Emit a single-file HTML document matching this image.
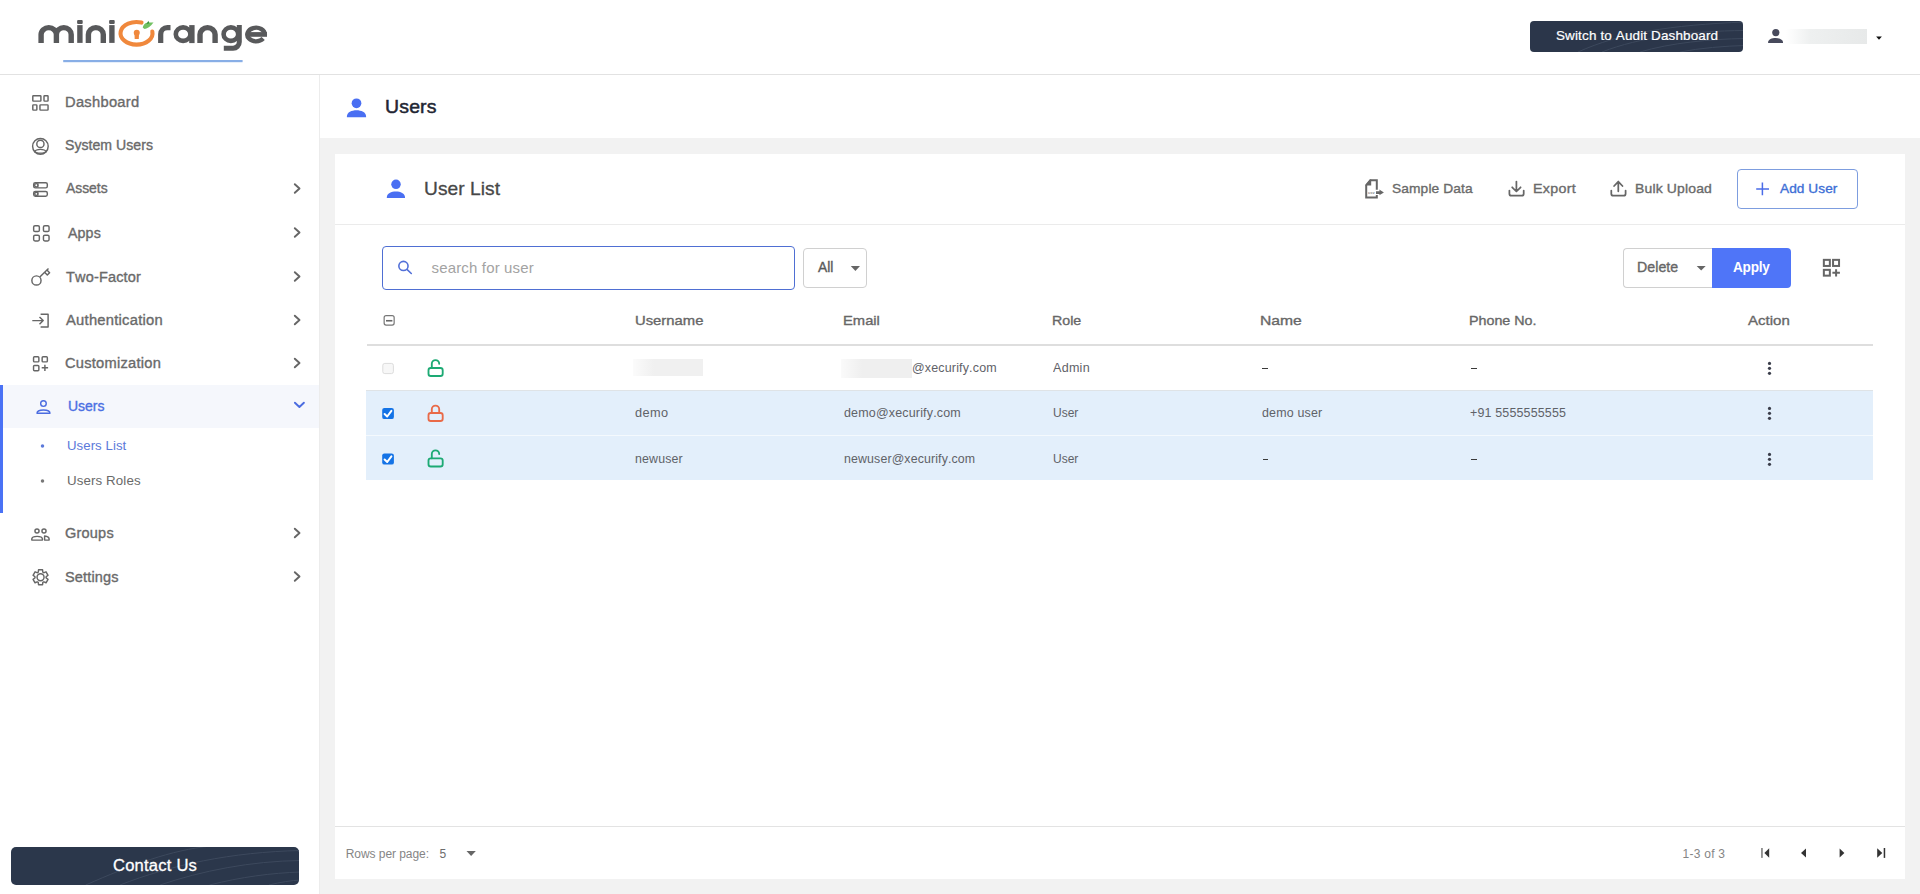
<!DOCTYPE html>
<html><head><meta charset="utf-8"><title>Users</title>
<style>
*{box-sizing:border-box;margin:0;padding:0}
html,body{width:1920px;height:894px;overflow:hidden;background:#fff}
body{position:relative;font-family:"Liberation Sans",sans-serif;font-kerning:none}
.t{position:absolute;white-space:nowrap;font-family:"Liberation Sans",sans-serif}
.ov{position:absolute;left:0;top:0}
.b{position:absolute}
</style></head><body>
<!-- header -->
<div class="b" style="left:0;top:74px;width:1920px;height:1px;background:#e2e2e2"></div>

<svg class="ov" width="300" height="74" viewBox="0 0 300 74">
 <g fill="none" stroke="#58595b" stroke-width="5.4" stroke-linecap="butt">
  <path d="M41.1,42.9 L41.1,34.6 A7.65,7.0 0 0 1 56.4,34.6 L56.4,42.9 M56.4,34.6 A7.4,7.0 0 0 1 71.2,34.6 L71.2,42.9"/>
  <path d="M79.9,42.9 L79.9,25.1"/>
  <path d="M88.4,42.9 L88.4,34.6 A7.45,7.0 0 0 1 103.3,34.6 L103.3,42.9"/>
  <path d="M111.9,42.9 L111.9,25.1"/>
  <path d="M160.7,42.9 L160.7,34.2 A6.6,6.6 0 0 1 167.3,27.6 L170.5,27.6" stroke-width="5.2"/>
  <ellipse cx="183.1" cy="34.15" rx="7.3" ry="6.75" stroke-width="4.6"/>
  <path d="M191.9,25.1 L191.9,43.1"/>
  <path d="M200.0,42.9 L200.0,34.6 A7.55,7.0 0 0 1 215.1,34.6 L215.1,42.9"/>
  <ellipse cx="230.9" cy="34.15" rx="7.3" ry="6.75" stroke-width="4.6"/>
  <path d="M239.3,25.1 L239.3,42.0 A6.2,6.2 0 0 1 233.1,48.2 L223.8,48.2" stroke-width="5.0"/>
  <path d="M264.9,34.45 A8.8,6.85 0 1 0 263.2,38.6" stroke-width="4.4"/>
  <path d="M247.2,34.45 L267.0,34.45" stroke-width="4.7"/>
 </g>
 <g fill="#58595b">
  <rect x="77.1" y="20.0" width="5.6" height="3.9" rx="1"/>
  <rect x="109.1" y="20.0" width="5.6" height="3.9" rx="1"/>
 </g>
 <path d="M141.5,22.6 A16,11.3 0 1 0 152.3,31.5" fill="none" stroke="#f0883c" stroke-width="4.1" stroke-linecap="round"/>
 <circle cx="136.75" cy="32.7" r="3.0" fill="#f0883c"/>
 <path d="M134.5,33.5 L139.0,33.5 L138.8,38.9 L134.7,38.9 Z" fill="#f0883c"/>
 <path d="M142.8,27.8 C143.5,23.5 147.0,22.4 149.5,22.6 L153.6,22.6 C151.5,24.5 150.0,28.2 144.6,28.9 Z" fill="#72c163"/>
 <path d="M146.5,24.0 L148.4,20.7 L149.3,23.2 Z" fill="#2f8f3a"/>
 <rect x="63.2" y="60.0" width="179.4" height="2.2" fill="#88aee6"/>
</svg>

<div class="b" style="left:1530px;top:21px;width:213px;height:31px;background:#2b364a;border-radius:4px;overflow:hidden"><svg width="213" height="31" viewBox="0 0 213 31" style="position:absolute;left:0;top:0"><g fill="none" stroke="#3d495d" stroke-width="1"><path d="M48,31 C90,12 140,4 215,1"/><path d="M72,31 C110,16 160,10 215,9.5"/><path d="M110,31 C140,22 180,18 215,17.5"/><path d="M150,31 C170,27 195,25 215,24.5"/></g></svg></div>
<div class="b" style="left:1786px;top:29px;width:81px;height:15px;background:linear-gradient(90deg,#ffffff 0%,#eef0f0 30%,#e7e9e9 100%)"></div>
<!-- sidebar -->
<div class="b" style="left:319px;top:75px;width:1px;height:819px;background:#ececec"></div>
<div class="b" style="left:0;top:385px;width:319px;height:43px;background:#f5f7fc"></div>
<div class="b" style="left:0;top:385px;width:3px;height:128px;background:#4a72f5"></div>
<div class="b" style="left:11px;top:847px;width:288px;height:38px;background:#2b374b;border-radius:5px;overflow:hidden"><svg width="288" height="38" viewBox="0 0 288 38" style="position:absolute;left:0;top:0"><g fill="none" stroke="#3d495d" stroke-width="1"><path d="M74.7,38 C120,18 160,3 200,-1"/><path d="M109,38 C160,18 220,5 290,3.5"/><path d="M149,38 C190,24 240,14 290,13.5"/><path d="M198.5,38 C230,30 260,26 290,25"/><path d="M258,38 C270,35 280,33.5 290,33"/></g></svg></div>
<!-- content bg -->
<div class="b" style="left:320px;top:138px;width:1600px;height:756px;background:#f2f2f2"></div>
<div class="b" style="left:335px;top:154px;width:1570px;height:725px;background:#fff"></div>
<div class="b" style="left:335px;top:224px;width:1570px;height:1px;background:#ebebeb"></div>
<div class="b" style="left:335px;top:826px;width:1570px;height:1px;background:#e3e3e3"></div>
<!-- add user button -->
<div class="b" style="left:1737px;top:169px;width:121px;height:40px;border:1px solid #7d9ddf;border-radius:4px"></div>
<!-- search -->
<div class="b" style="left:382px;top:246px;width:413px;height:44px;border:1.3px solid #4f6fd3;border-radius:4px"></div>
<div class="b" style="left:803px;top:248px;width:64px;height:40px;border:1px solid #d0d0d0;border-radius:4px"></div>
<div class="b" style="left:1623px;top:248px;width:90px;height:40px;border:1px solid #d0d0d0;border-right:none;border-radius:4px 0 0 4px"></div>
<div class="b" style="left:1712px;top:248px;width:79px;height:40px;background:#4f75f8;border-radius:0 4px 4px 0"></div>
<!-- table -->
<div class="b" style="left:367px;top:344px;width:1506px;height:2px;background:#dedede"></div>
<div class="b" style="left:366px;top:390px;width:1507px;height:1px;background:#dfe3e6"></div>
<div class="b" style="left:366px;top:391px;width:1507px;height:44px;background:#e3effb"></div>
<div class="b" style="left:366px;top:435px;width:1507px;height:1px;background:#f4f9fd"></div>
<div class="b" style="left:366px;top:436px;width:1507px;height:44px;background:#e3effb"></div>
<div class="b" style="left:632.9px;top:359px;width:70.4px;height:17px;background:linear-gradient(90deg,#fbfbfb,#f0f0f0 30%,#f0f0f0)"></div>
<div class="b" style="left:841px;top:359px;width:71px;height:19px;background:linear-gradient(90deg,#fafafa,#efefef 30%,#efefef)"></div>
<div class="b" style="left:1262.3px;top:368px;width:5.6px;height:1.1px;background:#3a3a3a"></div>
<div class="b" style="left:1471.1px;top:368px;width:5.6px;height:1.1px;background:#3a3a3a"></div>
<div class="b" style="left:1262.5px;top:459px;width:5.6px;height:1.1px;background:#3a3a3a"></div>
<div class="b" style="left:1471.1px;top:459px;width:5.6px;height:1.1px;background:#3a3a3a"></div>

<svg class="ov" width="1920" height="894" viewBox="0 0 1920 894">
 <g fill="none" stroke="#666666" stroke-width="1.45" stroke-linejoin="round">
  <!-- dashboard -->
  <rect x="32.8" y="95.7" width="8.1" height="5.4" rx="0.6"/>
  <rect x="44.0" y="95.7" width="4.05" height="5.4" rx="0.6"/>
  <rect x="32.8" y="104.85" width="4.05" height="5.25" rx="0.6"/>
  <rect x="39.95" y="104.85" width="8.1" height="5.25" rx="0.6"/>
  <!-- system users -->
  <circle cx="40.4" cy="146.35" r="7.8"/>
  <circle cx="40.4" cy="143.9" r="3.6"/>
  <path d="M34.6,151.6 C36.2,148.6 44.6,148.6 46.2,151.6 C44.6,153.6 36.2,153.6 34.6,151.6 Z"/>
  <!-- assets -->
  <rect x="33.7" y="182.75" width="13.6" height="5.1" rx="1.6"/>
  <rect x="33.7" y="191.45" width="13.6" height="4.7" rx="1.6"/>
  <circle cx="36.3" cy="185.3" r="1.7"/>
  <circle cx="36.3" cy="193.8" r="1.6"/>
  <line x1="38.0" y1="182.75" x2="38.0" y2="187.85" stroke-width="0.8"/>
  <line x1="38.0" y1="191.45" x2="38.0" y2="196.15" stroke-width="0.8"/>
  <!-- apps -->
  <rect x="33.65" y="225.65" width="5.7" height="5.95" rx="1.4"/>
  <rect x="43.45" y="225.65" width="5.6" height="5.95" rx="1.4"/>
  <rect x="33.65" y="235.15" width="5.7" height="5.75" rx="1.4"/>
  <rect x="43.45" y="235.15" width="5.6" height="5.75" rx="1.4"/>
  <!-- two factor -->
  <circle cx="36.45" cy="280.45" r="4.6"/>
  <path d="M39.8,277.1 L48.5,268.4"/>
  <path d="M44.6,272.3 L47.3,275.0 L49.6,272.7 L46.9,270.0"/>
  <!-- authentication -->
  <path d="M32.3,320.6 L43.2,320.6 M39.5,316.9 L43.2,320.6 L39.5,324.3"/>
  <path d="M40.6,314.2 L48.1,314.2 L48.1,326.9 L40.6,326.9"/>
  <!-- customization -->
  <rect x="33.55" y="356.75" width="5.3" height="5.1" rx="0.9"/>
  <rect x="42.15" y="356.75" width="5.2" height="5.1" rx="0.9"/>
  <rect x="33.55" y="365.45" width="5.3" height="5.2" rx="0.9"/>
  <path d="M41.7,367.75 L48.1,367.75 M44.9,364.8 L44.9,370.9"/>
  <!-- groups -->
  <circle cx="37.0" cy="531.0" r="2.05"/>
  <circle cx="44.0" cy="531.0" r="2.05"/>
  <path d="M31.8,540.1 L31.8,538.8 C32.2,535.6 42.0,535.6 42.4,538.8 L42.4,540.1 Z"/>
  <path d="M44.6,536.0 C47.4,536.3 49.1,537.5 49.1,539.0 L49.1,540.1 L44.6,540.1 Z"/>
  <!-- settings -->
  <path d="M42.80,572.01 L42.56,569.81 L38.54,569.81 L38.30,572.01 L37.80,572.54 L37.09,572.71 L35.07,571.82 L33.06,575.29 L34.84,576.60 L35.05,577.30 L34.84,578.00 L33.06,579.31 L35.07,582.78 L37.09,581.89 L37.80,582.06 L38.30,582.59 L38.54,584.79 L42.56,584.79 L42.80,582.59 L43.30,582.06 L44.01,581.89 L46.03,582.78 L48.04,579.31 L46.26,578.00 L46.05,577.30 L46.26,576.60 L48.04,575.29 L46.03,571.82 L44.01,572.71 L43.30,572.54 Z"/>
  <circle cx="40.55" cy="577.3" r="3.5"/>
  <!-- chevrons -->
  <g stroke-width="1.9" stroke-linecap="round">
   <path d="M294.8,184.2 L299.5,188.5 L294.8,192.8"/>
   <path d="M294.8,228.2 L299.5,232.5 L294.8,236.8"/>
   <path d="M294.8,272.2 L299.5,276.5 L294.8,280.8"/>
   <path d="M294.8,315.7 L299.5,320.0 L294.8,324.3"/>
   <path d="M294.8,358.7 L299.5,363.0 L294.8,367.3"/>
   <path d="M294.8,528.7 L299.5,533.0 L294.8,537.3"/>
   <path d="M294.8,572.2 L299.5,576.5 L294.8,580.8"/>
  </g>
 </g>
 <!-- users active icon + chevron -->
 <g fill="none" stroke="#4b6ce0" stroke-width="1.4" stroke-linecap="round" stroke-linejoin="round">
  <circle cx="43.45" cy="403.6" r="2.8"/>
  <path d="M37.0,413.3 C37.0,408.8 50.0,408.8 50.0,413.3 Z"/>
  <path d="M294.9,402.7 L299.4,407.0 L303.9,402.7" stroke-width="1.9"/>
 </g>
 <circle cx="42.5" cy="446" r="1.75" fill="#5b79da"/>
 <circle cx="42.5" cy="481" r="1.75" fill="#777"/>
</svg>


<svg class="ov" width="1920" height="894" viewBox="0 0 1920 894">
 <!-- title person -->
 <g fill="#4a6ff2">
  <circle cx="356.5" cy="103.3" r="4.85"/>
  <path d="M346.9,117.2 L346.9,116.4 C346.9,108.3 366.1,108.3 366.1,116.4 L366.1,117.2 Z"/>
  <circle cx="396.0" cy="184.35" r="4.75"/>
  <path d="M386.8,198.1 L386.8,197.4 C386.8,189.6 405.0,189.6 405.0,197.4 L405.0,198.1 Z"/>
 </g>
 <!-- header user -->
 <g fill="#474a5c">
  <circle cx="1775.8" cy="32.6" r="3.6"/>
  <path d="M1768.1,43.0 L1768.1,42.3 C1768.1,36.6 1783.0,36.6 1783.0,42.3 L1783.0,43.0 Z"/>
 </g>
 <path d="M1876.1,36.6 L1881.9,36.6 L1879.0,39.7 Z" fill="#111"/>
 <!-- sample data icon -->
 <g fill="none" stroke="#666" stroke-width="2.0">
  <path d="M1376.8,189.7 L1376.8,180.2 L1370.3,180.2 L1366.2,185.0 L1366.2,197.5 L1376.8,197.5 L1376.8,195.0"/>
 </g>
 <path d="M1365.4,185.6 L1370.0,179.6 L1371.2,179.6 L1371.2,185.6 Z" fill="#666"/>
 <path d="M1376.0,191.3 L1379.6,191.3 L1379.3,189.5 L1383.9,192.6 L1379.3,195.3 L1379.6,193.9 L1376.0,193.9 Z" fill="#666"/>
 <text x="1368.0" y="193.9" font-size="4" font-weight="bold" fill="#8a8a8a" font-family="Liberation Sans">csv</text>
 <!-- export -->
 <g fill="none" stroke="#666" stroke-width="1.75" stroke-linecap="round" stroke-linejoin="round">
  <path d="M1509.4,190.6 L1509.4,193.7 Q1509.4,195.7 1511.4,195.7 L1521.7,195.7 Q1523.7,195.7 1523.7,193.7 L1523.7,190.6"/>
  <path d="M1516.4,181.6 L1516.4,191.3 M1512.2,187.3 L1516.4,191.5 L1520.6,187.3"/>
  <path d="M1611.3,190.6 L1611.3,193.7 Q1611.3,195.7 1613.3,195.7 L1623.6,195.7 Q1625.6,195.7 1625.6,193.7 L1625.6,190.6"/>
  <path d="M1618.3,191.3 L1618.3,181.7 M1614.1,186.0 L1618.3,181.7 L1622.5,186.0"/>
 </g>
 <!-- add user plus -->
 <path d="M1756.2,189.0 L1769.0,189.0 M1762.4,182.4 L1762.4,195.3" stroke="#4a6ce8" stroke-width="1.5" fill="none"/>
 <!-- search icon -->
 <g fill="none" stroke="#5270d8" stroke-width="1.6" stroke-linecap="round">
  <circle cx="403.45" cy="265.95" r="4.6"/>
  <path d="M407.2,269.7 L411.3,273.5"/>
 </g>
 <!-- carets -->
 <path d="M850.8,266.0 L860.0,266.0 L855.4,271.0 Z" fill="#666"/>
 <path d="M1696.7,266.0 L1705.7,266.0 L1701.2,270.6 Z" fill="#666"/>
 <!-- grid+ -->
 <g fill="none" stroke="#666" stroke-width="2">
  <rect x="1823.85" y="259.85" width="6.0" height="6.1"/>
  <rect x="1833.05" y="259.85" width="6.0" height="6.1"/>
  <rect x="1823.85" y="269.85" width="6.0" height="5.8"/>
  <path d="M1832.4,272.8 L1839.9,272.8 M1836.1,269.2 L1836.1,276.4"/>
 </g>
 <!-- header checkbox -->
 <rect x="384.15" y="315.55" width="10.0" height="9.5" rx="2" fill="#fff" stroke="#777" stroke-width="1.2"/>
 <path d="M386.0,320.75 L392.4,320.75" stroke="#666" stroke-width="1.6"/>
 <!-- row1 checkbox -->
 <rect x="382.8" y="363.4" width="10.6" height="10.2" rx="2" fill="#f7f7f7" stroke="#dcdcdc" stroke-width="1"/>
 <!-- checked -->
 <rect x="382.2" y="407.9" width="11.7" height="11.2" rx="2.2" fill="#1473e6"/>
 <path d="M384.6,414.0 L387.2,416.5 L391.4,410.8" fill="none" stroke="#fff" stroke-width="2" stroke-linecap="round" stroke-linejoin="round"/>
 <rect x="382.2" y="453.4" width="11.7" height="11.2" rx="2.2" fill="#1473e6"/>
 <path d="M384.6,459.5 L387.2,462.0 L391.4,456.3" fill="none" stroke="#fff" stroke-width="2" stroke-linecap="round" stroke-linejoin="round"/>
 <!-- locks -->
 <g fill="none" stroke-width="1.85" stroke-linecap="round">
  <g stroke="#1daa74">
   <rect x="428.5" y="368.0" width="14.2" height="8.0" rx="2.3"/>
   <path d="M431.8,368.0 L431.8,363.8 A3.7,3.7 0 0 1 439.2,363.8"/>
  </g>
  <g stroke="#e96a48">
   <rect x="428.5" y="413.0" width="14.2" height="8.0" rx="2.3"/>
   <path d="M431.8,413.0 L431.8,409.3 A3.7,3.7 0 0 1 439.2,409.3 L439.2,413.0"/>
  </g>
  <g stroke="#1daa74">
   <rect x="428.5" y="458.3" width="14.2" height="8.2" rx="2.3"/>
   <path d="M431.8,458.3 L431.8,454.1 A3.7,3.7 0 0 1 439.2,454.1"/>
  </g>
 </g>
 <!-- kebabs -->
 <g fill="#3b3e4b">
  <circle cx="1769.5" cy="363.4" r="1.6"/><circle cx="1769.5" cy="368.3" r="1.6"/><circle cx="1769.5" cy="373.3" r="1.6"/>
  <circle cx="1769.5" cy="408.4" r="1.6"/><circle cx="1769.5" cy="413.3" r="1.6"/><circle cx="1769.5" cy="418.3" r="1.6"/>
  <circle cx="1769.5" cy="454.4" r="1.6"/><circle cx="1769.5" cy="459.3" r="1.6"/><circle cx="1769.5" cy="464.3" r="1.6"/>
 </g>
 <!-- footer caret -->
 <path d="M466.5,851.0 L475.8,851.0 L471.15,856.0 Z" fill="#666"/>
 <!-- pagination -->
 <g fill="#333">
  <rect x="1761.2" y="848.0" width="1.5" height="9.9" fill="#777"/>
  <path d="M1769.2,848.3 L1769.2,857.8 L1764.4,853.0 Z"/>
  <path d="M1806.0,848.6 L1806.0,857.5 L1801.0,853.0 Z"/>
  <path d="M1839.6,848.6 L1839.6,857.5 L1844.4,853.0 Z"/>
  <path d="M1877.2,848.3 L1877.2,857.8 L1882.3,853.0 Z"/>
  <rect x="1883.7" y="848.0" width="1.5" height="9.9"/>
 </g>
</svg>

<div class="t" style="left:64.89px;top:93px;font-size:14px;line-height:18px;color:#6a6a6a;letter-spacing:0.265px;transform:scaleX(1.0502);transform-origin:0 0;-webkit-text-stroke:0.35px currentColor;">Dashboard</div>
<div class="t" style="left:65.46px;top:136px;font-size:14px;line-height:18px;color:#6a6a6a;letter-spacing:0.030px;transform:scaleX(1.0057);transform-origin:0 0;-webkit-text-stroke:0.35px currentColor;">System Users</div>
<div class="t" style="left:66.07px;top:179px;font-size:14px;line-height:18px;color:#6a6a6a;letter-spacing:-0.031px;transform:scaleX(0.9945);transform-origin:0 0;-webkit-text-stroke:0.35px currentColor;">Assets</div>
<div class="t" style="left:67.87px;top:224px;font-size:14px;line-height:18px;color:#6a6a6a;letter-spacing:0.108px;transform:scaleX(1.0157);transform-origin:0 0;-webkit-text-stroke:0.35px currentColor;">Apps</div>
<div class="t" style="left:65.77px;top:268px;font-size:14px;line-height:18px;color:#6a6a6a;letter-spacing:0.174px;transform:scaleX(1.0347);transform-origin:0 0;-webkit-text-stroke:0.35px currentColor;">Two-Factor</div>
<div class="t" style="left:66.07px;top:311px;font-size:14px;line-height:18px;color:#6a6a6a;letter-spacing:0.231px;transform:scaleX(1.0540);transform-origin:0 0;-webkit-text-stroke:0.35px currentColor;">Authentication</div>
<div class="t" style="left:65.15px;top:354px;font-size:14px;line-height:18px;color:#6a6a6a;letter-spacing:0.223px;transform:scaleX(1.0483);transform-origin:0 0;-webkit-text-stroke:0.35px currentColor;">Customization</div>
<div class="t" style="left:67.82px;top:397px;font-size:14px;line-height:18px;color:#4b6fe3;letter-spacing:-0.007px;transform:scaleX(0.9988);transform-origin:0 0;-webkit-text-stroke:0.35px currentColor;">Users</div>
<div class="t" style="left:66.68px;top:437px;font-size:13px;line-height:17px;color:#5b79da;letter-spacing:0.062px;transform:scaleX(1.0149);transform-origin:0 0;">Users List</div>
<div class="t" style="left:66.67px;top:472px;font-size:13px;line-height:17px;color:#6a6a6a;letter-spacing:0.108px;transform:scaleX(1.0240);transform-origin:0 0;">Users Roles</div>
<div class="t" style="left:65.07px;top:524px;font-size:14px;line-height:18px;color:#6a6a6a;letter-spacing:0.208px;transform:scaleX(1.0362);transform-origin:0 0;-webkit-text-stroke:0.35px currentColor;">Groups</div>
<div class="t" style="left:65.14px;top:568px;font-size:14px;line-height:18px;color:#6a6a6a;letter-spacing:0.163px;transform:scaleX(1.0359);transform-origin:0 0;-webkit-text-stroke:0.35px currentColor;">Settings</div>
<div class="t" style="left:112.96px;top:856px;font-size:16px;line-height:20px;color:#ffffff;letter-spacing:0.200px;transform:scaleX(1.0359);transform-origin:0 0;-webkit-text-stroke:0.3px #fff;">Contact Us</div>
<div class="t" style="left:1555.99px;top:27px;font-size:13px;line-height:17px;color:#ffffff;letter-spacing:0.142px;transform:scaleX(1.0349);transform-origin:0 0;-webkit-text-stroke:0.2px #fff;">Switch to Audit Dashboard</div>
<div class="t" style="left:385.10px;top:95px;font-size:19px;line-height:24px;color:#1f2633;letter-spacing:0.180px;transform:scaleX(1.0232);transform-origin:0 0;-webkit-text-stroke:0.5px currentColor;">Users</div>
<div class="t" style="left:424.12px;top:177px;font-size:19px;line-height:24px;color:#474747;letter-spacing:0.052px;transform:scaleX(1.0085);transform-origin:0 0;-webkit-text-stroke:0.3px currentColor;">User List</div>
<div class="t" style="left:1392.37px;top:180px;font-size:13.5px;line-height:17px;color:#6a6a6a;letter-spacing:0.101px;transform:scaleX(1.0199);transform-origin:0 0;-webkit-text-stroke:0.35px currentColor;">Sample Data</div>
<div class="t" style="left:1532.73px;top:180px;font-size:13.5px;line-height:17px;color:#6a6a6a;letter-spacing:0.272px;transform:scaleX(1.0570);transform-origin:0 0;-webkit-text-stroke:0.35px currentColor;">Export</div>
<div class="t" style="left:1634.66px;top:180px;font-size:13.5px;line-height:17px;color:#6a6a6a;letter-spacing:0.154px;transform:scaleX(1.0338);transform-origin:0 0;-webkit-text-stroke:0.35px currentColor;">Bulk Upload</div>
<div class="t" style="left:1780.47px;top:180px;font-size:13.5px;line-height:17px;color:#3d6fd6;letter-spacing:0.061px;transform:scaleX(1.0115);transform-origin:0 0;-webkit-text-stroke:0.35px currentColor;">Add User</div>
<div class="t" style="left:431.58px;top:258px;font-size:15px;line-height:19px;color:#a3a3a3;letter-spacing:0.152px;">search for user</div>
<div class="t" style="left:817.87px;top:258px;font-size:14px;line-height:18px;color:#5a5a5a;letter-spacing:-0.039px;transform:scaleX(0.9920);transform-origin:0 0;-webkit-text-stroke:0.35px currentColor;">All</div>
<div class="t" style="left:1637.44px;top:258px;font-size:14px;line-height:18px;color:#666666;letter-spacing:0.056px;transform:scaleX(1.0109);transform-origin:0 0;-webkit-text-stroke:0.35px currentColor;">Delete</div>
<div class="t" style="left:1732.66px;top:258px;font-size:14px;line-height:18px;color:#ffffff;letter-spacing:-0.203px;transform:scaleX(0.9693);transform-origin:0 0;font-weight:bold;">Apply</div>
<div class="t" style="left:635.06px;top:312px;font-size:13.5px;line-height:17px;color:#676767;transform:scaleX(1.0984);transform-origin:0 0;-webkit-text-stroke:0.35px currentColor;">Username</div>
<div class="t" style="left:843.29px;top:312px;font-size:13.5px;line-height:17px;color:#676767;letter-spacing:-0.000px;transform:scaleX(1.0930);transform-origin:0 0;-webkit-text-stroke:0.35px currentColor;">Email</div>
<div class="t" style="left:1052.24px;top:312px;font-size:13.5px;line-height:17px;color:#676767;transform:scaleX(1.0515);transform-origin:0 0;-webkit-text-stroke:0.35px currentColor;">Role</div>
<div class="t" style="left:1260.42px;top:312px;font-size:13.5px;line-height:17px;color:#676767;transform:scaleX(1.1602);transform-origin:0 0;-webkit-text-stroke:0.35px currentColor;">Name</div>
<div class="t" style="left:1469.23px;top:312px;font-size:13.5px;line-height:17px;color:#676767;letter-spacing:-0.000px;transform:scaleX(1.0577);transform-origin:0 0;-webkit-text-stroke:0.35px currentColor;">Phone No.</div>
<div class="t" style="left:1748.47px;top:312px;font-size:13.5px;line-height:17px;color:#676767;transform:scaleX(1.1142);transform-origin:0 0;-webkit-text-stroke:0.35px currentColor;">Action</div>
<div class="t" style="left:912.32px;top:361px;font-size:12px;line-height:15px;color:#5f6268;letter-spacing:0.161px;transform:scaleX(1.0386);transform-origin:0 0;">@xecurify.com</div>
<div class="t" style="left:1053.38px;top:361px;font-size:12px;line-height:15px;color:#5f6268;letter-spacing:0.247px;transform:scaleX(1.0468);transform-origin:0 0;">Admin</div>
<div class="t" style="left:634.86px;top:406px;font-size:12px;line-height:15px;color:#5f6268;letter-spacing:0.375px;transform:scaleX(1.0618);transform-origin:0 0;">demo</div>
<div class="t" style="left:844.08px;top:406px;font-size:12px;line-height:15px;color:#5f6268;letter-spacing:0.172px;transform:scaleX(1.0396);transform-origin:0 0;">demo@xecurify.com</div>
<div class="t" style="left:1052.67px;top:406px;font-size:12px;line-height:15px;color:#5f6268;letter-spacing:-0.001px;transform:scaleX(0.9997);transform-origin:0 0;">User</div>
<div class="t" style="left:1261.98px;top:406px;font-size:12px;line-height:15px;color:#5f6268;letter-spacing:0.164px;transform:scaleX(1.0365);transform-origin:0 0;">demo user</div>
<div class="t" style="left:1470.49px;top:406px;font-size:12px;line-height:15px;color:#5f6268;letter-spacing:0.162px;transform:scaleX(1.0367);transform-origin:0 0;">+91 5555555555</div>
<div class="t" style="left:634.58px;top:452px;font-size:12px;line-height:15px;color:#5f6268;letter-spacing:0.145px;transform:scaleX(1.0303);transform-origin:0 0;">newuser</div>
<div class="t" style="left:843.78px;top:452px;font-size:12px;line-height:15px;color:#5f6268;letter-spacing:0.127px;transform:scaleX(1.0302);transform-origin:0 0;">newuser@xecurify.com</div>
<div class="t" style="left:1052.67px;top:452px;font-size:12px;line-height:15px;color:#5f6268;letter-spacing:-0.001px;transform:scaleX(0.9997);transform-origin:0 0;">User</div>
<div class="t" style="left:345.72px;top:847px;font-size:12px;line-height:15px;color:#858585;letter-spacing:-0.059px;">Rows per page:</div>
<div class="t" style="left:439.42px;top:847px;font-size:12px;line-height:15px;color:#6d6d6d;">5</div>
<div class="t" style="left:1682.49px;top:847px;font-size:12px;line-height:15px;color:#858585;letter-spacing:0.264px;">1-3 of 3</div>
</body></html>
